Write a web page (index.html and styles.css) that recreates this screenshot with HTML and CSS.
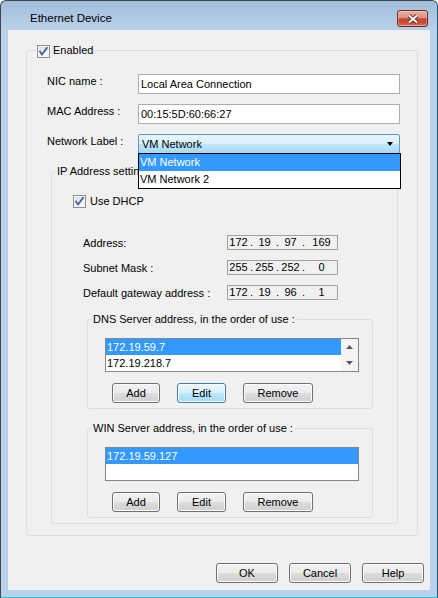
FILE: index.html
```html
<!DOCTYPE html>
<html lang="en">
<head>
    <meta charset="UTF-8">
    <meta name="viewport" content="width=device-width, initial-scale=1.0">
    <title>Ethernet Device</title>
    <link rel="stylesheet" href="styles.css">
</head>
<body>
<div class="window">
    <div class="titlebar">
        <span class="title">Ethernet Device</span>
        <span class="close-btn">
            <svg width="12" height="10" viewBox="0 0 12 10">
                <path d="M2 1.5 L10 8.5 M10 1.5 L2 8.5" stroke="#5e2e26" stroke-width="3.8"/>
                <path d="M2 1.5 L10 8.5 M10 1.5 L2 8.5" stroke="#fff" stroke-width="2"/>
            </svg>
        </span>
    </div>

    <div class="client">
        <fieldset class="group main-group">
            <legend><span class="checkbox"><svg width="11" height="11" viewBox="0 0 11 11"><path d="M1.5 4.8 L4 8.6 L9.4 1.2" fill="none" stroke="#4259a0" stroke-width="1.7"/></svg></span>Enabled</legend>
            <div class="main-body">
                <div class="form-row">
                    <label for="nic_name">NIC name :</label>
                    <input type="text" id="nic_name" value="Local Area Connection">
                </div>
                <div class="form-row">
                    <label for="mac">MAC Address :</label>
                    <input type="text" id="mac" value="00:15:5D:60:66:27">
                </div>
                <div class="form-row">
                    <label>Network Label :</label>
                    <div class="combo">
                        <div class="combo-box">VM Network<span class="combo-arrow"></span></div>
                        <ul class="combo-list">
                            <li class="selected">VM Network</li>
                            <li>VM Network 2</li>
                        </ul>
                    </div>
                </div>

                <fieldset class="group ip-group">
                    <legend>IP Address settings</legend>
                    <div class="ip-body">
                        <div class="dhcp-row">
                            <span class="checkbox"><svg width="11" height="11" viewBox="0 0 11 11"><path d="M1.5 4.8 L4 8.6 L9.4 1.2" fill="none" stroke="#4259a0" stroke-width="1.7"/></svg></span>
                            <span>Use DHCP</span>
                        </div>

                        <div class="addr-rows">
                            <div class="addr-row">
                                <label>Address:</label>
                                <div class="ip-field"><span class="octet">172</span><span class="dot">.</span><span class="octet">19</span><span class="dot">.</span><span class="octet">97</span><span class="dot">.</span><span class="octet">169</span></div>
                            </div>
                            <div class="addr-row">
                                <label>Subnet Mask :</label>
                                <div class="ip-field"><span class="octet">255</span><span class="dot">.</span><span class="octet">255</span><span class="dot">.</span><span class="octet">252</span><span class="dot">.</span><span class="octet">0</span></div>
                            </div>
                            <div class="addr-row">
                                <label>Default gateway address :</label>
                                <div class="ip-field"><span class="octet">172</span><span class="dot">.</span><span class="octet">19</span><span class="dot">.</span><span class="octet">96</span><span class="dot">.</span><span class="octet">1</span></div>
                            </div>
                        </div>

                        <fieldset class="group server-group">
                            <legend>DNS Server address, in the order of use :</legend>
                            <div class="server-body">
                                <div class="listbox">
                                    <ul class="list-items">
                                        <li class="selected">172.19.59.7</li>
                                        <li>172.19.218.7</li>
                                    </ul>
                                    <div class="scrollbar">
                                        <span class="scroll-btn"><svg width="7" height="4" viewBox="0 0 7 4"><path d="M0 4 L3.5 0 L7 4 Z" fill="#5a5a5a"/></svg></span>
                                        <span class="scroll-btn"><svg width="7" height="4" viewBox="0 0 7 4"><path d="M0 0 L7 0 L3.5 4 Z" fill="#5a5a5a"/></svg></span>
                                    </div>
                                </div>
                                <div class="btn-row">
                                    <button class="btn btn-add">Add</button>
                                    <button class="btn btn-edit focused">Edit</button>
                                    <button class="btn btn-remove">Remove</button>
                                </div>
                            </div>
                        </fieldset>

                        <fieldset class="group server-group">
                            <legend>WIN Server address, in the order of use :</legend>
                            <div class="server-body">
                                <div class="listbox">
                                    <ul class="list-items">
                                        <li class="selected">172.19.59.127</li>
                                    </ul>
                                </div>
                                <div class="btn-row">
                                    <button class="btn btn-add">Add</button>
                                    <button class="btn btn-edit">Edit</button>
                                    <button class="btn btn-remove">Remove</button>
                                </div>
                            </div>
                        </fieldset>
                    </div>
                </fieldset>
            </div>
        </fieldset>

        <div class="dialog-buttons">
            <button class="btn btn-dialog">OK</button>
            <button class="btn btn-dialog">Cancel</button>
            <button class="btn btn-dialog">Help</button>
        </div>
    </div>
</div>
</body>
</html>
```

FILE: styles.css
```css
* {
    box-sizing: border-box;
}
body {
    margin: 0;
    font-family: "Liberation Sans", Arial, sans-serif;
    font-size: 11px;
    color: #000;
    background: #fff;
}

/* window frame */
.window {
    width: 438px;
    height: 598px;
    border: 1px solid #3b4651;
    border-right-color: #1b5d70;
    border-bottom-color: #22c4dc;
    border-radius: 6px 6px 0 0;
    padding: 0 7px 7px;
    background: linear-gradient(#a3bddc, #b9d1ea 29px);
    display: flex;
    flex-direction: column;
}
.titlebar {
    height: 29px;
    display: flex;
    justify-content: space-between;
    align-items: flex-start;
}
.title {
    font-size: 11.5px;
    line-height: 14px;
    padding: 10px 0 0 22px;
}
.close-btn {
    width: 31px;
    height: 17px;
    margin: 9px 2px 0 0;
    border: 1px solid #6f2a1e;
    border-radius: 3px;
    background: linear-gradient(#eab0a4 0%, #dd8f80 45%, #c5462f 52%, #c84c36 78%, #de7c63 100%);
    box-shadow: inset 0 0 0 1px rgba(255, 255, 255, 0.3);
    display: flex;
    align-items: center;
    justify-content: center;
}
.client {
    flex: 1;
    background: #f0f0f0;
    display: flex;
    flex-direction: column;
}

/* group boxes */
.group {
    margin: 0;
    padding: 0;
    min-width: 0;
    border: 1px solid #d5dfe5;
    border-radius: 3px;
}
.group legend {
    margin-left: 3px;
    padding: 0 2px;
    line-height: 14px;
}
.main-group {
    margin: 13px 12px 0 18px;
}
.main-group > legend {
    margin-left: 8px;
}
.main-body {
    padding: 16px 16px 11px 20px;
    display: flex;
    flex-direction: column;
    gap: 10px;
}

.checkbox {
    display: inline-flex;
    align-items: center;
    justify-content: center;
    width: 13px;
    height: 13px;
    border: 1px solid #8e8f8f;
    background: linear-gradient(#dcdee2, #fbfbfb);
    box-shadow: inset 0 0 0 1px #f4f4f4;
    vertical-align: -3px;
    margin-right: 3px;
}

/* labelled rows */
.form-row {
    display: flex;
    height: 20px;
}
.form-row label {
    width: 91px;
    line-height: 14px;
}
.form-row input {
    width: 262px;
    height: 20px;
    margin: 0;
    padding: 0 2px;
    border: 1px solid #abadb3;
    background: #fff;
    font: inherit;
    color: #000;
    outline: none;
}

.combo {
    position: relative;
    width: 262px;
}
.combo-box {
    height: 20px;
    padding: 0 6px 0 3px;
    border: 1px solid #5b9bd1;
    border-radius: 2px;
    background: linear-gradient(#eaf6fd, #d9f0fc 50%, #bee6fd 50%, #a7d9f5);
    display: flex;
    justify-content: space-between;
    align-items: center;
}
.combo-arrow {
    width: 0;
    height: 0;
    border-left: 3.5px solid transparent;
    border-right: 3.5px solid transparent;
    border-top: 4px solid #000;
}
.combo-list {
    position: absolute;
    top: 19px;
    left: 0;
    width: 263px;
    margin: 0;
    padding: 0;
    list-style: none;
    border: 1px solid #000;
    background: #fff;
    z-index: 2;
}
.combo-list li {
    line-height: 17px;
    padding-left: 1px;
}
.selected {
    background: #3399ff;
    color: #fff;
}

/* IP settings */
.ip-group {
    margin: 0 3px 0 4px;
}
.ip-body {
    padding: 16px 0 5px 21px;
}
.dhcp-row {
    display: flex;
    align-items: center;
    height: 14px;
}
.dhcp-row .checkbox {
    margin-right: 4px;
}
.addr-rows {
    margin: 27px 0 0 10px;
    display: flex;
    flex-direction: column;
    gap: 10px;
}
.addr-row {
    display: flex;
    align-items: center;
    height: 15px;
}
.addr-row label {
    width: 144px;
}
.ip-field {
    display: flex;
    width: 111px;
    height: 15px;
    border: 1px solid #a0a0a0;
    background: #f0f0f0;
    line-height: 13px;
}
.octet {
    width: 21px;
    text-align: center;
}
.octet:last-child {
    flex: 1;
}
.dot {
    width: 5px;
    padding-left: 1px;
}

/* server lists */
.server-group {
    margin: 12px 24px 0 14px;
}
.server-body {
    padding: 12px 0 5px 17px;
}
.listbox {
    width: 254px;
    height: 34px;
    border: 1px solid #828790;
    background: #fff;
    display: flex;
}
.list-items {
    flex: 1;
    margin: 0;
    padding: 0;
    list-style: none;
}
.list-items li {
    height: 16px;
    line-height: 16px;
    padding-left: 1px;
}
.scrollbar {
    width: 17px;
    background: #f4f4f4;
    display: flex;
    flex-direction: column;
}
.scroll-btn {
    height: 16px;
    display: flex;
    align-items: center;
    justify-content: center;
}

/* buttons */
.btn {
    height: 20px;
    margin: 0;
    padding: 0;
    border: 1px solid #707070;
    border-radius: 3px;
    background: linear-gradient(#f2f2f2, #ebebeb 50%, #dddddd 50%, #cfcfcf);
    box-shadow: inset 0 0 0 1px #fcfcfc;
    font: inherit;
    color: #000;
}
.btn.focused {
    border-color: #3c7fb1;
    background: linear-gradient(#eaf6fd, #d9f0fc 50%, #bee6fd 50%, #a7d9f5);
}
.btn-row {
    display: flex;
    gap: 17px;
    margin: 11px 0 0 7px;
}
.btn-add {
    width: 48px;
}
.btn-edit {
    width: 49px;
}
.btn-remove {
    width: 70px;
}
.dialog-buttons {
    display: flex;
    justify-content: flex-end;
    gap: 11px;
    margin-top: 27px;
    padding-right: 6px;
}
.btn-dialog {
    width: 62px;
}
```
